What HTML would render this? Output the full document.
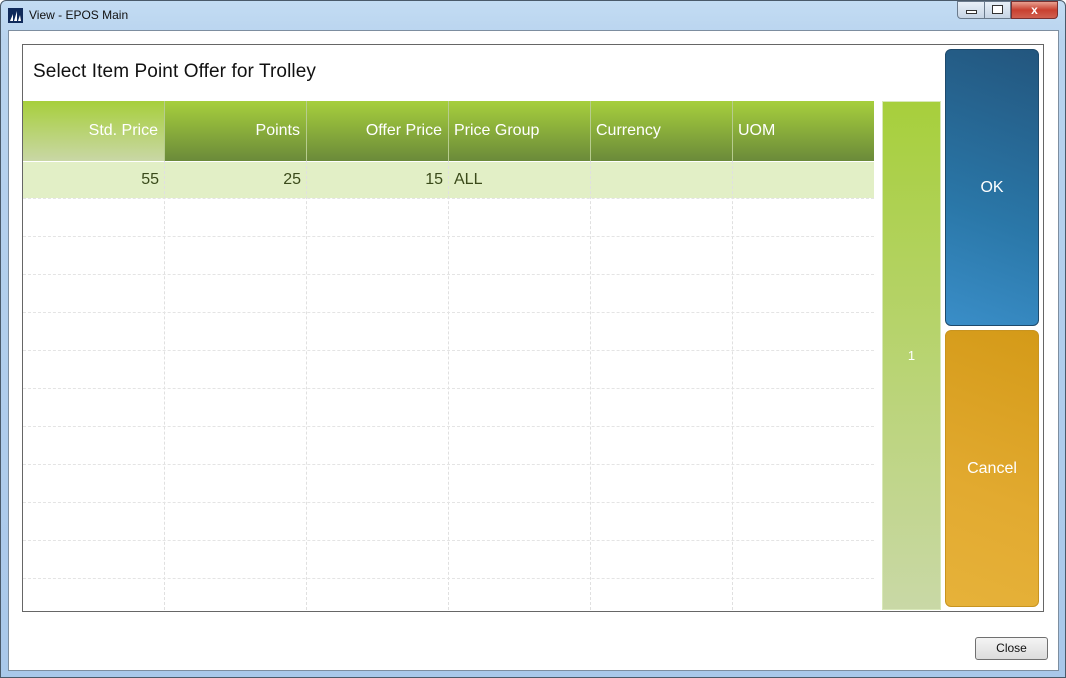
<!DOCTYPE html>
<html><head><style>
*{margin:0;padding:0;box-sizing:border-box}
body{width:1066px;height:678px;overflow:hidden;background:#fff;font-family:"Liberation Sans",sans-serif;position:relative}
.a{position:absolute}
.frame{left:0;top:0;width:1066px;height:678px;background:linear-gradient(#c3dcf3,#b8d3ee 40px,#a9c8ea);border:1px solid #4a5a6a;border-radius:6px 6px 0 0}
.client{left:8px;top:30px;width:1051px;height:641px;background:#fff;border:1px solid #7d8ea0}
.hd{top:101px;height:60px;color:#fff;font-size:16px;line-height:60px;background:linear-gradient(#a7cf3c,#6b8a3a);border-right:1px solid #b7cc8e}
.c{position:absolute;font-size:16px;color:#3a4a1a;line-height:37px}
.vl{position:absolute;top:198px;height:412px;border-left:1px dashed #e0e0e0;width:0}
.hl{position:absolute;left:23px;width:851px;border-top:1px dashed #e4e4e4;height:0}
</style></head><body>
<div class="a frame"></div>
<div class="a" style="left:8px;top:8px;width:15px;height:15px;background:#102a5a"></div>
<svg class="a" style="left:9px;top:10px" width="13" height="12"><path d="M1 11L4 4L4 11ZM5 11L8 1L8 11ZM9 11L11 5L12 11Z" fill="#fff"/></svg>
<div class="a" style="left:29px;top:8px;font-size:12px;color:#111">View - EPOS Main</div>
<div class="a" style="left:957px;top:1px;width:28px;height:18px;border:1px solid #6a7a8c;border-radius:0 0 0 4px;background:linear-gradient(#e8f0f8,#c6d4e4)"></div>
<div class="a" style="left:966px;top:10px;width:11px;height:4px;border:1px solid #333;background:#fff"></div>
<div class="a" style="left:984px;top:1px;width:27px;height:18px;border:1px solid #6a7a8c;background:linear-gradient(#e8f0f8,#c6d4e4)"></div>
<div class="a" style="left:992px;top:5px;width:11px;height:9px;border:1px solid #333;background:#fff"></div>
<div class="a" style="left:1011px;top:1px;width:47px;height:18px;border:1px solid #7a3030;border-radius:0 0 4px 0;background:linear-gradient(#e8a090,#c84030 50%,#d06050);color:#fff;font-weight:bold;font-size:12px;text-align:center;line-height:16px">x</div>
<div class="a client"></div>
<div class="a" style="left:22px;top:44px;width:1022px;height:568px;border:1px solid #666"></div>
<div class="a" style="left:33px;top:61px;font-size:19px;color:#111;letter-spacing:0.1px">Select Item Point Offer for Trolley</div>
<div class="a hd" style="left:23px;width:142px;text-align:right;padding-right:6px;background:linear-gradient(#a7cf3c,#c9d7a6)">Std. Price</div>
<div class="a hd" style="left:165px;width:142px;text-align:right;padding-right:6px">Points</div>
<div class="a hd" style="left:307px;width:142px;text-align:right;padding-right:6px">Offer Price</div>
<div class="a hd" style="left:449px;width:142px;padding-left:5px">Price Group</div>
<div class="a hd" style="left:591px;width:142px;padding-left:5px">Currency</div>
<div class="a hd" style="left:733px;width:141px;padding-left:5px;border-right:0">UOM</div>
<div class="a" style="left:23px;top:161px;width:851px;height:37px;background:#e2efc6;border-top:1px solid #fff"></div>
<div class="vl" style="left:164px;top:161px;height:449px"></div>
<div class="vl" style="left:306px;top:161px;height:449px"></div>
<div class="vl" style="left:448px;top:161px;height:449px"></div>
<div class="vl" style="left:590px;top:161px;height:449px"></div>
<div class="vl" style="left:732px;top:161px;height:449px"></div>
<div class="hl" style="top:198px"></div><div class="hl" style="top:236px"></div><div class="hl" style="top:274px"></div><div class="hl" style="top:312px"></div><div class="hl" style="top:350px"></div><div class="hl" style="top:388px"></div><div class="hl" style="top:426px"></div><div class="hl" style="top:464px"></div><div class="hl" style="top:502px"></div><div class="hl" style="top:540px"></div><div class="hl" style="top:578px"></div>
<div class="c" style="left:23px;width:136px;top:161px;text-align:right">55</div>
<div class="c" style="left:165px;width:136px;top:161px;text-align:right">25</div>
<div class="c" style="left:307px;width:136px;top:161px;text-align:right">15</div>
<div class="c" style="left:454px;top:161px">ALL</div>
<div class="a" style="left:882px;top:101px;width:59px;height:509px;background:linear-gradient(#a7cf3c,#c9d8a6);border:1px solid #d8e8b8;color:#fff;font-size:13px;text-align:center;line-height:507px">1</div>
<div class="a" style="left:945px;top:49px;width:94px;height:277px;border-radius:6px;background:linear-gradient(200deg,#23567e,#2a77a8 60%,#3a8ec8);border:1px solid #1e4a6c;color:#fff;font-size:16px;text-align:center;line-height:275px">OK</div>
<div class="a" style="left:945px;top:330px;width:94px;height:277px;border-radius:6px;background:linear-gradient(200deg,#d49a18,#e2aa30 60%,#e6b23a);border:1px solid #c89420;color:#fff;font-size:16px;text-align:center;line-height:275px">Cancel</div>
<div class="a" style="left:975px;top:637px;width:73px;height:23px;border:1px solid #707070;border-radius:3px;background:linear-gradient(#f4f4f4,#dcdcdc);font-size:12px;text-align:center;line-height:21px;color:#111">Close</div>
</body></html>
